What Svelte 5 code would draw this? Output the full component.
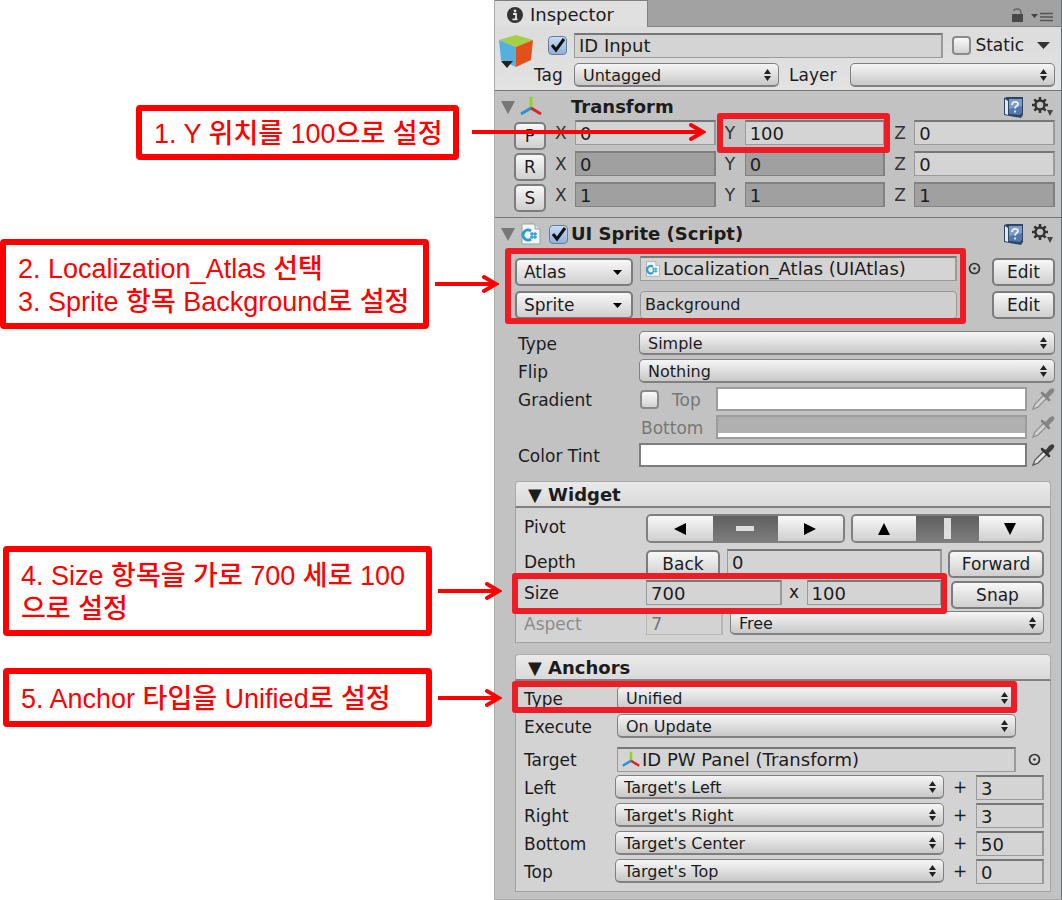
<script>
  let name = $state('ID Input');
  const transform = [
    { key: 'P', label: 'Position', cells: [['X', '0', false], ['Y', '100', false], ['Z', '0', false]] },
    { key: 'R', label: 'Rotation', cells: [['X', '0', true], ['Y', '0', true], ['Z', '0', false]] },
    { key: 'S', label: 'Scale', cells: [['X', '1', true], ['Y', '1', true], ['Z', '1', true]] }
  ];
  const sides = [
    ['Left', "Target's Left", '3'],
    ['Right', "Target's Right", '3'],
    ['Bottom', "Target's Center", '50'],
    ['Top', "Target's Top", '0']
  ];
</script>

{#snippet picker(id, value, label)}
  <span class="picker">
    <select {id} aria-label={label}><option>{value}</option></select>
    <svg width="7" height="12" viewBox="0 0 7 12" aria-hidden="true"><path d="M3.5 0 7 5H0zM0 7h7l-3.5 5z" fill="#222" /></svg>
  </span>
{/snippet}

{#snippet gizmo(size)}
  <svg width={size} height={size} viewBox="0 0 22 22" fill="none" stroke-width="3" aria-hidden="true">
    <path d="M11 13V1" stroke="#8fd615" />
    <path d="M11 12 1 18" stroke="#2a93d0" />
    <path d="M11 12l10 6" stroke="#d8232a" />
  </svg>
{/snippet}

{#snippet script(size)}
  <svg width={size} height={size} viewBox="0 0 20 22" aria-hidden="true">
    <path d="M1 1h13l5 5v15H1z" fill="#f4f6f7" stroke="#9aa3a8" />
    <path d="M14 1v5h5" fill="#d5dde1" stroke="#9aa3a8" />
    <path d="M10 8a5 5 0 1 0 0 8" fill="none" stroke="#2f9cc9" stroke-width="3" />
    <path d="M11 9v7M14 9v7M9 11h7M9 14h7" stroke="#2f9cc9" stroke-width="1.3" />
  </svg>
{/snippet}

{#snippet tools()}
  <span class="tools">
    <button class="bare" aria-label="Help">
      <svg width="21" height="22" viewBox="0 0 21 22">
        <path d="M1 2 4 1h16v18l-2 3L1 19z" fill="#2d4668" />
        <path d="M2 3 5 5v14l-3-1z" fill="#dfe7f1" />
        <path d="M6 3h13v14l-2 2-11-1z" fill="#5377a8" />
        <path d="M6 3h13v7L6 13z" fill="#7d9cc6" />
        <path d="M9 9c0-4 6-4 6-1 0 2-3 2-3 4.500M12 14.500v2" stroke="#e9f0f8" stroke-width="1.800" fill="none" />
      </svg>
    </button>
    <button class="bare" aria-label="Component options">
      <svg width="22" height="20" viewBox="0 0 22 20">
        <circle cx="8" cy="8" r="4.500" fill="none" stroke="#333" stroke-width="2.500" />
        <g stroke="#333" stroke-width="2.500"><path d="M8 0v3M8 13v3M0 8h3M13 8h3M2.300 2.300l2.200 2.200M11.500 11.500l2.200 2.200M13.700 2.300l-2.200 2.200M4.500 11.500l-2.200 2.200" /></g>
        <path d="M15 13h6l-3 6z" fill="#444" />
      </svg>
    </button>
  </span>
{/snippet}

{#snippet target()}
  <button class="bare target" aria-label="Select object">
    <svg width="13" height="13" viewBox="0 0 13 13"><circle cx="6.500" cy="6.500" r="5" fill="none" stroke="#333" stroke-width="1.700" /><circle cx="6.500" cy="6.500" r="1.300" fill="#333" /></svg>
  </button>
{/snippet}

{#snippet dropper(dim)}
  <button class="bare" class:dim aria-label="Pick colour">
    <svg width="24" height="24" viewBox="0 0 24 24">
      <path d="M2 22l2-5L14 7l3 3L7 20z" fill="#e8e8e8" stroke="#555" stroke-width="1.300" />
      <path d="M11 6l7 7" stroke="#333" stroke-width="2.500" stroke-linecap="round" />
      <path d="M14 8l4-5q3-3 5-1 1 2-1 4l-5 5z" fill="#3c3c3c" />
    </svg>
  </button>
{/snippet}

{#snippet arrow()}
  <span class="arrow" aria-hidden="true">
    <i></i>
    <svg width="18" height="20" viewBox="0 0 18 20"><path d="M3 3l12 7-12 7" fill="none" stroke="#f00" stroke-width="4" stroke-linecap="round" /><path d="M8 6l10 4-10 4z" fill="#f00" /></svg>
  </span>
{/snippet}

{#snippet foldout()}
  <svg class="fold" width="14" height="13" viewBox="0 0 14 13" aria-hidden="true"><path d="M0 0h14L7 13z" fill="#777" /></svg>
{/snippet}

<div class="page">
  <section class="notes">
    <div class="note first">1. Y 위치를 100으로 설정{@render arrow()}</div>
    <div class="note second">2. Localization_Atlas 선택<br />3. Sprite 항목 Background로 설정{@render arrow()}</div>
    <div class="note third">4. Size 항목을 가로 700 세로 100<br />으로 설정{@render arrow()}</div>
    <div class="note fourth">5. Anchor 타입을 Unified로 설정{@render arrow()}</div>
  </section>

  <main class="inspector">
    <div class="tabs">
      <div class="tab">
        <svg width="16" height="16" viewBox="0 0 16 16" aria-hidden="true"><circle cx="8" cy="8" r="8" fill="#333" /><path d="M6 7h3v5M5.500 12.300h5" stroke="#e4e4e4" stroke-width="1.800" fill="none" /><circle cx="8" cy="4" r="1.400" fill="#e4e4e4" /></svg>
        Inspector
      </div>
      <svg class="lock" width="12" height="14" viewBox="0 0 12 14" aria-hidden="true"><path d="M3 3q0-2 3-2 4 0 4 4v2" fill="none" stroke="#666" stroke-width="1.600" /><path d="M1 6h11v8H1z" fill="#484848" /></svg>
      <svg width="22" height="10" viewBox="0 0 22 10" aria-hidden="true"><path d="M0 2h7L3.500 6z" fill="#444" /><path d="M9 1.500h13M9 5h13M9 8.500h13" stroke="#555" stroke-width="1.500" /></svg>
    </div>

    <header class="object">
      <svg class="cube" width="36" height="36" viewBox="0 0 36 36" aria-hidden="true">
        <path d="M1 6 18 1l17 5-17 7z" fill="#a5cf45" />
        <path d="M1 6l17 7v20L3 26z" fill="#56b0dd" />
        <path d="M35 6l-17 7v20l15-7z" fill="#e2501c" />
        <path d="M3 27h12l-6 7z" fill="#222" />
      </svg>
      <div class="line">
        <input class="check push" type="checkbox" checked aria-label="Active" />
        <input class="field grow" bind:value={name} aria-label="Name" />
        <input class="check" type="checkbox" id="static" />
        <label class="static" for="static">Static</label>
        <svg class="more" width="13" height="7" viewBox="0 0 13 7" aria-hidden="true"><path d="M0 0h13L6.500 7z" fill="#333" /></svg>
      </div>
      <div class="line">
        <label class="tag" for="tag">Tag</label>
        {@render picker('tag', 'Untagged')}
        <label class="layer" for="layer">Layer</label>
        {@render picker('layer', '')}
      </div>
    </header>

    <section class="component">
      <div class="heading">{@render foldout()}<span class="glyph">{@render gizmo(22)}</span><h2>Transform</h2>{@render tools()}</div>
      {#each transform as row}
        <div class="vector">
          <button class="btn" aria-label={'Reset ' + row.label}>{row.key}</button>
          {#each row.cells as [axis, value, dark], i}
            <label class:marked={row.key === 'P' && i === 1}><span>{axis}</span><input class="field" class:dark {value} /></label>
          {/each}
        </div>
      {/each}
    </section>

    <section class="component sprite">
      <div class="heading">{@render foldout()}<span class="glyph">{@render script(22)}</span><input class="check" type="checkbox" checked aria-label="Enable UI Sprite" /><h2>UI Sprite (Script)</h2>{@render tools()}</div>

      <div class="assets">
        <div class="marked pair">
          <button class="btn drop">Atlas <svg width="9" height="5" viewBox="0 0 9 5"><path d="M0 0h9L4.500 5z" /></svg></button>
          <div class="field object-field">{@render script(16)}Localization_Atlas (UIAtlas)</div>
          <button class="btn drop">Sprite <svg width="9" height="5" viewBox="0 0 9 5"><path d="M0 0h9L4.500 5z" /></svg></button>
          <div class="field round">Background</div>
        </div>
        {@render target()}
        <div class="edits"><button class="btn">Edit</button><button class="btn">Edit</button></div>
      </div>

      <div class="props">
        <label for="type">Type</label>{@render picker('type', 'Simple')}
        <label for="flip">Flip</label>{@render picker('flip', 'Nothing')}
        <label for="gradient">Gradient</label>
        <div class="colour"><input id="gradient" class="check" type="checkbox" /><span class="sub">Top</span><button class="swatch faded" aria-label="Top colour"></button>{@render dropper(true)}</div>
        <span></span>
        <div class="colour"><span class="sub wide">Bottom</span><button class="swatch faded shade" aria-label="Bottom colour"></button>{@render dropper(true)}</div>
        <span class="tint">Color Tint</span>
        <div class="colour"><button class="swatch" aria-label="Color Tint"></button>{@render dropper(false)}</div>
      </div>

      <div class="group">
        <h3><button>▼ Widget</button></h3>
        <div class="body widget">
          <div class="row pivot">
            <span class="name">Pivot</span>
            <div class="seg">
              <button aria-label="Left"><svg width="12" height="12" viewBox="0 0 12 12"><path d="M12 0v12L0 6z" /></svg></button>
              <button class="on" aria-label="Centre"><svg width="18" height="5" viewBox="0 0 18 5"><path d="M0 0h18v5H0z" fill="#ddd" /></svg></button>
              <button aria-label="Right"><svg width="12" height="12" viewBox="0 0 12 12"><path d="M0 0v12l12-6z" /></svg></button>
            </div>
            <div class="seg">
              <button aria-label="Top"><svg width="12" height="12" viewBox="0 0 12 12"><path d="M0 12h12L6 0z" /></svg></button>
              <button class="on" aria-label="Middle"><svg width="7" height="21" viewBox="0 0 7 21"><path d="M0 0h7v21H0z" fill="#ddd" /></svg></button>
              <button aria-label="Bottom"><svg width="12" height="12" viewBox="0 0 12 12"><path d="M0 0h12L6 12z" /></svg></button>
            </div>
          </div>
          <div class="row">
            <label class="name" for="depth">Depth</label>
            <button class="btn back">Back</button>
            <input class="field grow" id="depth" value="0" />
            <button class="btn forward">Forward</button>
          </div>
          <div class="row">
            <div class="marked size">
              <label class="name" for="width">Size</label>
              <input class="field grow" id="width" value="700" />
              <span class="times">x</span>
              <input class="field grow" value="100" aria-label="Height" />
            </div>
            <button class="btn snap">Snap</button>
          </div>
          <div class="row">
            <label class="name off" for="aspect">Aspect</label>
            <input class="field ratio" id="aspect" value="7" disabled />
            {@render picker('keep', 'Free', 'Aspect mode')}
          </div>
        </div>
      </div>

      <div class="group">
        <h3><button>▼ Anchors</button></h3>
        <div class="body anchors">
          <div class="row inset"><div class="marked kind"><label class="name" for="atype">Type</label>{@render picker('atype', 'Unified')}</div></div>
          <div class="row inset"><label class="name" for="exec">Execute</label>{@render picker('exec', 'On Update')}</div>
          <div class="row goal"><span class="name">Target</span><div class="field object-field">{@render gizmo(18)}ID PW Panel (Transform)</div>{@render target()}</div>
          {#each sides as [side, value, offset]}
            <div class="row side"><label class="name" for={side}>{side}</label>{@render picker(side, value)}<span class="plus">+</span><input class="field" value={offset} aria-label={side + ' offset'} /></div>
          {/each}
        </div>
      </div>
    </section>
  </main>
</div>

<style>
  :global(body) { background: #fff; }
  .page, .page * { box-sizing: border-box; }
  .page {
    display: grid;
    grid-template-columns: minmax(0, 494fr) minmax(0, 568fr);
    overflow: hidden;
    font: 17px/24px "DejaVu Sans", sans-serif;
    color: #1c1c1c;
  }
  button, input, select { font: inherit; color: inherit; margin: 0; padding: 0; min-width: 0; }
  svg { flex: none; display: block; }
  h2, h3 { margin: 0; font-size: 18px; }

  .notes { display: flex; flex-direction: column; padding-right: 62px; color: #f00; font: 500 27px/33px "Liberation Sans", "Noto Sans CJK KR", sans-serif; }
  .note { position: relative; border: 6px solid #f00; border-radius: 4px; padding: 8px 12px 4px; white-space: nowrap; background: #fff; }
  .first { margin: 105px -27px 0 136px; padding: 7px 12px 3px; }
  .second { margin: 79px 3px 0 0; }
  .third { margin: 217px 0 0 3px; }
  .fourth { margin: 32px 0 0 3px; padding: 9px 12px 5px; }
  .arrow { position: absolute; z-index: 3; left: calc(100% + 12px); top: 50%; width: 64px; height: 20px; margin-top: -10px; display: flex; align-items: center; }
  .first .arrow { left: calc(100% + 19px); width: 234px; margin-top: -11px; }
  .arrow i { flex: 1; height: 4px; margin-right: -8px; background: #f00; }

  .inspector { min-width: 0; padding-bottom: 7px; background: #c2c2c2; border: 1px solid #aaa; border-top: 0; border-right-color: #2a7fc4; }
  .tabs { display: flex; align-items: flex-end; height: 27px; padding: 0 8px 4px 0; background: #a2a2a2; border-bottom: 1px solid #828282; }
  .tab { display: flex; align-items: center; gap: 7px; align-self: flex-start; width: 153px; height: 27px; padding: 2px 12px 0; border: 1px solid #808080; border-width: 1px 1px 0 0; background: #e0e0e0; font-size: 18px; }
  .lock { margin: 0 8px 0 auto; }

  .object { position: relative; display: flex; flex-direction: column; gap: 6px; padding: 6px 6px 4px 39px; height: 64px; background: linear-gradient(#dcdcdc, #e2e2e2); border-bottom: 1px solid #777; }
  .cube { position: absolute; left: 3px; top: 7px; }
  .line { display: flex; align-items: center; height: 24px; }
  .push { margin: 0 7px 0 14px; }
  .static { margin: 0 13px 0 4px; }
  .object .line:first-of-type .grow { margin-right: 9px; }
  .more { margin-right: 5px; }
  .tag { width: 40px; }
  .layer { width: 71px; padding-left: 10px; }

  .check { appearance: none; flex: none; width: 19px; height: 19px; border: 2px solid #8a8a8a; border-radius: 4px; background: linear-gradient(#fafafa, #d2d2d2); }
  .check:checked { border: 1px solid #6d7c92; background: url("data:image/svg+xml,%3Csvg xmlns='http://www.w3.org/2000/svg' viewBox='0 0 17 17'%3E%3Cpath d='M3 8l4 5 8-11' fill='none' stroke='%23111' stroke-width='3'/%3E%3C/svg%3E"), linear-gradient(#c7dcf5, #8eb1de); }
  .field { width: 100%; height: 25px; padding: 0 4px; border: 1px solid #9a9a9a; border-width: 2px 2px 1px 1px; border-top-color: #777; border-radius: 0; background: #d4d4d4; font-size: 18px; line-height: 20px; }
  .dark { background: #a0a0a0; border-color: #808080; }
  .grow { flex: 1 1 0; width: 0; }

  .picker { display: grid; flex: 1 1 0; align-self: start; min-width: 0; align-items: center; }
  .picker select, .picker svg { grid-area: 1 / 1; }
  .picker select { appearance: none; width: 100%; height: 24px; padding: 2px 20px 0 8px; border: 1px solid #808080; border-bottom-width: 2px; border-radius: 5px; background: linear-gradient(#f6f6f6, #c8c8c8); font-size: 16px; line-height: 20px; }
  .picker svg { justify-self: end; margin-right: 8px; pointer-events: none; }
  .btn { height: 28px; border: 2px solid #7c7c7c; border-radius: 5px; background: linear-gradient(#f8f8f8, #cfcfcf); line-height: 22px; }
  .bare { border: 0; background: none; display: block; }

  .heading { display: flex; align-items: center; height: 29px; padding: 3px 7px 0 6px; }
  .glyph { width: 35px; padding-left: 5px; }
  .fold + .glyph + h2 { margin-left: 21px; }
  .heading .check { margin-right: 3px; margin-left: -1px; }
  .tools { display: flex; align-items: center; gap: 8px; margin-left: auto; }

  .vector { display: grid; grid-template-columns: 32px 1fr 1fr 1fr; height: 31px; padding: 0 6px 0 19px; }
  .vector label { position: relative; display: flex; padding-left: 9px; }
  .vector label span { flex: none; width: 20px; color: #333; padding-top: 1px; }
  .vector .btn { margin-top: 2px; }
  .component:has(.vector) { height: 127px; border-bottom: 1px solid #777; }

  .marked { position: relative; }
  .marked::after { content: ""; position: absolute; z-index: 2; border: 6px solid #ee1c24; border-radius: 3px; pointer-events: none; }
  .vector .marked::after { inset: -7px -5px -2px 1px; }

  .sprite .heading { height: 32px; padding-top: 0; }
  .assets { display: grid; grid-template-columns: 1fr 35px 63px; padding: 6px 6px 0 20px; }
  .pair { display: grid; grid-template-columns: 118px 1fr; column-gap: 7px; row-gap: 3px; }
  .pair::after { inset: -8px -9px -5px -10px; }
  .drop { display: flex; align-items: center; justify-content: space-between; padding: 0 9px 0 7px; margin-top: 2px; }
  .object-field { display: flex; align-items: center; gap: 2px; overflow: hidden; white-space: nowrap; }
  .round { height: 28px; margin-top: 2px; border: 1px solid #999; border-radius: 4px; background: #cfcfcf; font-size: 16px; line-height: 26px; }
  .target { justify-self: center; align-self: start; margin-top: 6px; }
  .edits { display: grid; row-gap: 5px; padding-top: 2px; }

  .props { display: grid; grid-template-columns: 121px 1fr; grid-auto-rows: 24px; row-gap: 4px; padding: 12px 6px 0 23px; }
  .props > label, .tint, .name { padding-top: 1px; }
  .colour { display: flex; align-items: center; }
  .colour .bare { margin-left: 4px; }
  .colour .check { margin-left: 1px; }
  .sub { width: 57px; padding: 1px 0 0 13px; color: #777; }
  .wide { width: 77px; padding-left: 2px; }
  .swatch { flex: 1; height: 24px; border: 2px solid #7d7d7d; border-radius: 0; background: #fff; }
  .faded { border-color: #9c9c9c; }
  .shade { background: linear-gradient(#b0b0b0 16px, #fff 16px); }
  .dim { opacity: 0.45; }

  .group { margin: 11px 10px 0 20px; }
  .props + .group { margin-top: 14px; }
  h3 { height: 27px; }
  h3 button { width: 100%; height: 27px; padding: 2px 0 0 12px; text-align: left; border: 1px solid #aaa; border-bottom: 2px solid #808080; border-radius: 4px 4px 0 0; background: linear-gradient(#eaeaea, #dadada); font-size: 18px; line-height: 20px; }
  .body { display: grid; padding: 6px 6px 8px 8px; border: 1px solid #a2a2a2; border-top: 0; background: #d3d3d3; }
  .row { display: flex; min-width: 0; }
  .name { flex: none; width: 122px; }
  .off { color: #8c8c8c; }
  .widget { grid-template-rows: 35px 31px 31px 24px; padding-bottom: 7px; }
  .widget .btn { margin-top: 1px; }
  .seg { display: flex; flex: 33; height: 29px; border: 2px solid #808080; border-radius: 5px; overflow: hidden; }
  .seg + .seg { flex: 32; margin-left: 6px; }
  .seg button { display: grid; place-items: center; flex: 1; border: 0; background: linear-gradient(#f8f8f8, #cfcfcf); }
  .seg .on { background: linear-gradient(#606060, #7c7c7c); }
  .back { width: 74px; margin-right: 7px; }
  .forward { width: 96px; margin-left: 6px; }
  .size { display: flex; flex: 1; }
  .size::after { inset: -7px -5px -3px -12px; }
  .times { width: 25px; text-align: center; }
  .snap { width: 93px; margin-left: 9px; }
  .ratio { flex: none; width: 77px; height: 24px; margin-right: 7px; opacity: 0.5; }
  .anchors { padding-top: 5px; grid-template-rows: 28px 33px 28px 28px 28px 28px 24px; }
  .anchors .name { width: 93px; }
  .inset { padding-right: 28px; }
  .kind { display: flex; flex: 1; }
  .kind::after { inset: -5px -1px 1px -12px; }
  .goal .field { flex: 1; width: 0; }
  .goal .target { width: 28px; padding-left: 12px; }
  .anchors .side .name { width: 91px; }
  .side .field { flex: none; width: 68px; }
  .plus { width: 32px; text-align: center; }
</style>
